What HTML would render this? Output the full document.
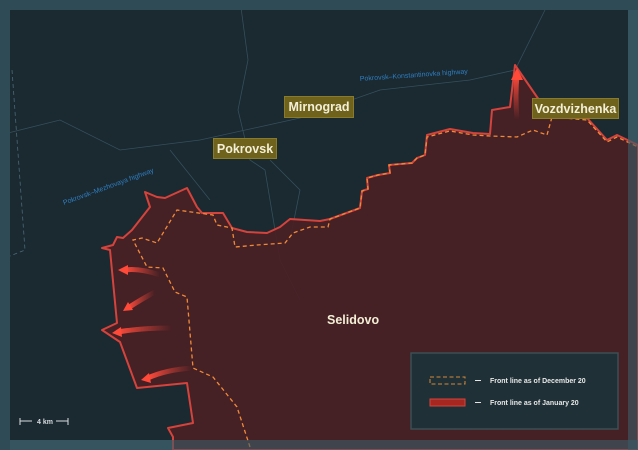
<!DOCTYPE html><html><head><meta charset="utf-8"><style>
body{margin:0;width:638px;height:450px;overflow:hidden;background:#2f4b56;font-family:"Liberation Sans",sans-serif}
svg{position:absolute;left:0;top:0}
.lb{position:absolute;background:#6f621d;color:#f3efd6;font-weight:bold;font-size:12.5px;display:flex;align-items:center;justify-content:center;border:1px solid #8a7b2a}
</style></head><body>
<svg width="638" height="450" viewBox="0 0 638 450">
<defs>
<linearGradient id="ar" x1="1" y1="0" x2="0" y2="0"><stop offset="0" stop-color="#e8453a" stop-opacity="0"/><stop offset="1" stop-color="#ff4a3a"/></linearGradient>
<linearGradient id="ar2" x1="0" y1="1" x2="0" y2="0"><stop offset="0" stop-color="#e8453a" stop-opacity="0"/><stop offset="1" stop-color="#ff4a3a"/></linearGradient>
</defs>
<rect x="10" y="10" width="618" height="430" fill="#1b2931"/>
<g stroke="#34505b" stroke-width="0.8" fill="none">
<path d="M240 0 L248 60 L238 110 L250 160 L265 170 L280 260 L300 300"/>
<path d="M0 135 L60 120 L120 150 L200 140 L300 118 L380 90 L470 80 L515 70 L545 10"/>
<path d="M270 160 L300 190 L290 240"/>
<path d="M170 150 L210 200"/>
</g>
<path d="M12 70 L25 250 L0 260" stroke="#4a6a76" stroke-dasharray="4 3" fill="none" stroke-width="0.8"/>
<polygon fill="#4a1f24" fill-opacity="0.9" stroke="#d4433c" stroke-width="2" stroke-linejoin="round" points="102,248 113,245 117,237 123,238 132,230 150,207 145,192 157,197 165,198 187,188 197,207 202,213 223,213 232,228 247,232 267,233 280,227 290,219 320,221 330,219 360,208 362,191 368,189 367,178 378,175 390,173 389,165 412,163 417,158 425,155 427,135 450,129 473,133 490,134 492,110 510,107 515,65 537,97 553,117 587,118 607,140 617,135 638,145 638,450 173,450 173,437 168,428 193,423 187,383 137,388 120,342 102,330 117,323 110,250"/>
<polyline fill="none" stroke="#f08a3a" stroke-width="1.3" stroke-dasharray="4 3" points="250,447 237,407 213,377 193,368 187,297 175,292 163,268 147,267 133,240 142,238 157,243 177,210 213,215 217,225 232,228 235,247 257,245 285,243 293,233 310,227 328,227 330,219 360,208 362,191 368,189 367,178 378,175 390,173 389,165 412,163 417,158 425,155 427,137 450,131 473,135 490,136 517,137 533,130 547,135 552,117 587,120 607,142 617,137 638,147"/>
<g fill="none" stroke="url(#ar)" stroke-width="5" stroke-linecap="round">
<path d="M160 275 Q140 268 125 270"/>
<path d="M155 292 Q140 300 128 308"/>
<path d="M172 328 Q140 328 118 332"/>
<path d="M192 368 Q165 370 148 378"/>
</g>
<g fill="#ff4a3a">
<polygon points="118,270 128,265 128,275"/><polygon points="123,311 128,302 133,310"/><polygon points="112,333 121,327 122,337"/><polygon points="141,380 149,373 151,383"/>
</g>
<path d="M517 120 Q515 95 517 75" stroke="url(#ar2)" stroke-width="5" fill="none"/>
<polygon points="517,68 511,80 523,80" fill="#ff4a3a"/>
<text x="0" y="0" fill="#2f7fc0" font-size="7" transform="translate(64,205) rotate(-20)">Pokrovsk–Mezhovaya highway</text>
<text x="0" y="0" fill="#2f7fc0" font-size="7" transform="translate(360,81) rotate(-4)">Pokrovsk–Konstantinovka highway</text>
<g stroke="#d8dde0" stroke-width="1"><path d="M20 421 H32 M20 418 V425 M56 421 H68 M68 418 V425"/></g>
<text x="37" y="424" fill="#d8dde0" font-size="7" font-weight="bold">4 km</text>
<rect x="0" y="440" width="638" height="10" fill="#3a5a66" fill-opacity="0.6"/>
<rect x="628" y="0" width="10" height="450" fill="#3a5a66" fill-opacity="0.6"/>
<rect x="0" y="0" width="638" height="10" fill="#2f4b56"/>
<rect x="0" y="0" width="10" height="450" fill="#2f4b56"/>
<rect x="411" y="353" width="207" height="76" fill="#1f3036" stroke="#3d4f55" stroke-width="1.5"/>
<rect x="430" y="377" width="35" height="7" fill="none" stroke="#d68a3a" stroke-dasharray="4 2.5"/>
<rect x="430" y="399" width="35" height="7" fill="#a5271f" stroke="#d4433c"/>
<path d="M475 380.5 H481 M475 402.5 H481" stroke="#e6e6e6"/>
<text x="490" y="383" fill="#e8e8e8" font-size="7" font-weight="bold">Front line as of December 20</text>
<text x="490" y="405" fill="#e8e8e8" font-size="7" font-weight="bold">Front line as of January 20</text>
<text x="327" y="324" fill="#f3efd6" font-size="12.5" font-weight="bold">Selidovo</text>
</svg>
<div class="lb" style="left:284px;top:96px;width:68px;height:20px">Mirnograd</div>
<div class="lb" style="left:213px;top:138px;width:62px;height:19px">Pokrovsk</div>
<div class="lb" style="left:532px;top:98px;width:85px;height:19px">Vozdvizhenka</div>
</body></html>
